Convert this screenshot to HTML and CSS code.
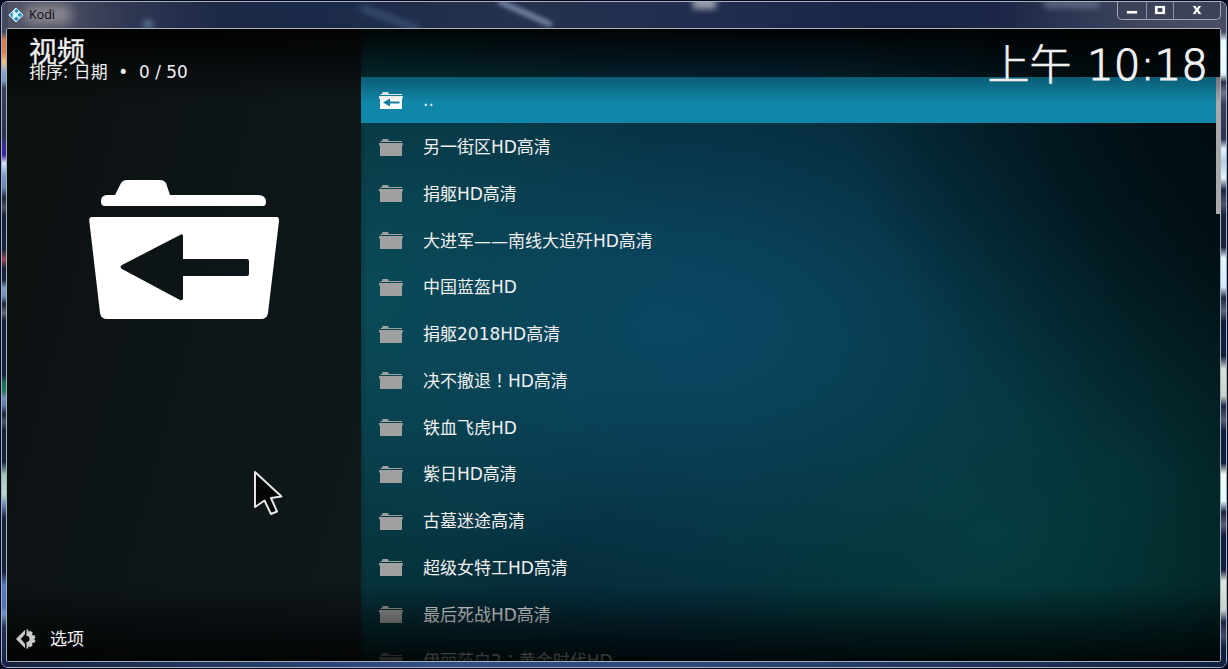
FILE: index.html
```html
<!DOCTYPE html>
<html lang="zh-CN">
<head>
<meta charset="utf-8">
<title>Kodi</title>
<link rel="stylesheet" href="styles.css">
</head>
<body>
<svg class="defs" width="0" height="0" aria-hidden="true">
  <symbol id="folder" viewBox="0 0 24 18">
    <path d="M1.500 3V2H3.200V1Q3.200 0 4 0H8.600Q9.400 0 9.500 1L9.800 2H23V3ZM0 4H23.800V6.500H23V17H1V6.500H0Z"/>
  </symbol>
</svg>
<div class="window">
  <div class="glass">
    <i class="smear smear-halo"></i><i class="smear smear-dot"></i><i class="smear smear-a"></i><i class="smear smear-b"></i><i class="smear smear-c"></i><i class="smear smear-d"></i>
  </div>
  <header class="titlebar">
    <svg class="logo" viewBox="0 0 16 16"><path d="M8 .5 15.5 8 8 15.500.5 8Z" fill="#e5f6fb"/><path d="M8.500 1.800 10.800 4 8.500 6.300 6.200 4ZM4.800 4.500v1.700L3 8 1.700 8ZM4.800 6.500V11.200L2.200 8.600ZM11.800 5.400 14.300 8l-2.500 2.600L9.200 8ZM8.500 9.400l2.300 2.400L8.300 14.200l-2.600-2.400Z" fill="#2299c5"/></svg>
    <span class="app-name">Kodi</span>
    <div class="controls">
      <span class="control"><svg viewBox="0 0 14 12"><path d="M1.500 6.500h11v3.500h-11z" fill="#fff" stroke="#4b4e58"/></svg></span>
      <span class="control"><svg viewBox="0 0 14 12"><path d="M1.500 1.500h11v9h-11zM5 4.500v3h4v-3z" fill="#fff" fill-rule="evenodd" stroke="#4b4e58"/></svg></span>
      <span class="control control-close"><svg viewBox="0 0 14 12"><path d="M2 1.500h3.500L7 3.600 8.500 1.500H12L9 5.800 12 10.500H8.500L7 8.200 5.500 10.500H2L5 5.800Z" fill="#fff" stroke="#4b4e58"/></svg></span>
    </div>
  </header>
  <main class="screen">
    <aside class="sidebar">
      <h1 class="title">视频</h1>
      <p class="sort">排序: 日期  •  0 / 50</p>
      <svg class="big-folder" viewBox="0 0 190 140">
        <path d="M16 26Q12 26 12 21.500 12 15 18 15H26L32 3Q34 0 38 0H71Q75 0 77 3L81 15H169Q177 15 177 22 177 26 174 26Z"/>
        <path fill-rule="evenodd" d="M3 37H188Q190 37 190 41L179 133Q178 139 172 139H18Q12 139 11 133L.3 41Q0 37 3 37ZM33 85Q30 87 33 89L91 120Q94 121 94 118V96H158Q160 96 160 94V81Q160 79 158 79H94V56Q94 53 91 55Z"/>
      </svg>
      <div class="options">
        <svg viewBox="0 0 20 20"><path d="M9 .8V5.300L4.800 10 9 14.700v4.500L0 10ZM10.500 .5h1.800v2.200l2-.9 2.400 2-.8 2.100 2.700.3.8 2.500-1.500 1.300 1.500 1.300-.8 2.500-2.700.3.800 2.100-2.400 2-2-.9v2.200H10.500v-6.500a3 3 0 0 0 0-6Z"/></svg>
        <span>选项</span>
      </div>
    </aside>
    <section class="library">
      <ul class="list">
        <li class="row selected"><svg viewBox="0 0 24 18"><use href="#folder"/><path class="arrow" d="M4 10.500 11 6.400v3H20.500v2.200H11v3Z"/></svg><span>..</span></li>
        <li class="row"><svg><use href="#folder"/></svg><span>另一街区HD高清</span></li>
        <li class="row"><svg><use href="#folder"/></svg><span>捐躯HD高清</span></li>
        <li class="row"><svg><use href="#folder"/></svg><span>大进军——南线大追歼HD高清</span></li>
        <li class="row"><svg><use href="#folder"/></svg><span>中国蓝盔HD</span></li>
        <li class="row"><svg><use href="#folder"/></svg><span>捐躯2018HD高清</span></li>
        <li class="row"><svg><use href="#folder"/></svg><span>决不撤退<b class="mark" lang="zh-TW">！</b>HD高清</span></li>
        <li class="row"><svg><use href="#folder"/></svg><span>铁血飞虎HD</span></li>
        <li class="row"><svg><use href="#folder"/></svg><span>紫日HD高清</span></li>
        <li class="row"><svg><use href="#folder"/></svg><span>古墓迷途高清</span></li>
        <li class="row"><svg><use href="#folder"/></svg><span>超级女特工HD高清</span></li>
        <li class="row"><svg><use href="#folder"/></svg><span>最后死战HD高清</span></li>
        <li class="row"><svg><use href="#folder"/></svg><span>伊丽莎白2<b class="mark" lang="zh-TW">：</b>黄金时代HD</span></li>
      </ul>
      <i class="scrollbar"></i>
    </section>
    <i class="shade shade-top"></i>
    <i class="shade shade-bottom"></i>
    <time class="clock"><span class="period">上午</span> 10:18</time>
    <svg class="pointer" viewBox="0 0 30 46"><path d="M2 2V37L11.500 30.500 18 44 24 41.500 18 28 28.500 26.500Z"/></svg>
  </main>
</div>
</body>
</html>
```

FILE: styles.css
```css
* { box-sizing: border-box; }
body {
  margin: 0;
  width: 1228px;
  height: 669px;
  overflow: hidden;
  background: #030a20;
  font-family: "DejaVu Sans", "Noto Sans CJK SC", sans-serif;
  color: #f0f0f0;
}
.defs { position: absolute; }
.window {
  position: relative;
  width: 1226px;
  height: 667px;
  margin: 1px;
  border: 1px solid #a9afbd;
  border-radius: 7px;
  overflow: hidden;
  background: #16233f;
}
.glass {
  position: absolute;
  inset: 0;
  background:
    linear-gradient(180deg, #424a62 0 30px, #d97a50 38px, #dc8055 50px, #efc385 60px, #83a5d0 70px, #7598c5 79px, #38425f 86px, #29314f 135px, #3c26a0 145px, #3c26a0 153px, #d7e5ff 161px, #7599c9 174px, #6889b9 185px, #1c2944 196px, #465064 205px, #17233d 214px, #18243e 248px, #a34452 257px, #18243e 266px, #18243e 278px, #7b9bc8 286px, #6f8fbc 294px, #18243e 302px, #5e697d 311px, #16223c 318px, #16223c 373px, #147451 381px, #24765c 389px, #6b8cbd 396px, #5e7dab 403px, #17233d 412px, #46526a 420px, #15213d 428px, #15213d 460px, #a4cbbb 473px, #bbdccc 492px, #6d8ec0 502px, #16233f 516px, #15213f 570px, #557fc5 584px, #4b73b4 604px, #7094c6 612px, #1f315b 625px, #14214a 664px) left / 6px 100% no-repeat,
    linear-gradient(180deg, #464b61 0 30px, #eaffff 39px, #e7fbff 72px, #28334b 80px, #69758d 91px, #37405a 102px, #29344e 137px, #e5f6ff 147px, #b9ccdd 160px, #e5f6ff 176px, #17243e 188px, #4a566b 202px, #16233d 213px, #16233d 245px, #e4f9ff 256px, #d3e9ff 285px, #182641 296px, #59677e 309px, #101e3d 320px, #101e3d 354px, #d5e2d7 367px, #c6d5ca 394px, #182641 404px, #536078 418px, #101e3d 429px, #101e3d 461px, #edfff1 472px, #e3fcff 499px, #182641 510px, #536078 523px, #101e3d 534px, #101e3d 568px, #e0eadc 579px, #c3d3cb 608px, #182641 620px, #404d68 634px, #101e3d 645px) right / 6px 100% no-repeat,
    linear-gradient(90deg, #515465 0, #4a4d62 60px, #303752 125px, #1b2947 220px, #1c2a49 310px, #24324f 520px, #1f2b4d 760px, #182544 880px, #1c2747 1000px, #40465f 1140px, #4c5064) top / 100% 28px no-repeat,
    linear-gradient(90deg, #16213c, #315087 35%, #2d4674 60%, #122040) bottom / 100% 6px no-repeat;
}
.smear { position: absolute; background: #7387aa; filter: blur(3px); }
.smear-halo { left: 22px; top: 3px; width: 48px; height: 19px; border-radius: 9px; background: #8b8991; filter: blur(6px); }
.smear-dot { left: 141px; top: 18px; width: 10px; height: 9px; border-radius: 50%; background: #62799d; }
.smear-a { left: 357px; top: 14px; width: 62px; height: 5px; transform: rotate(20deg); background: #40577c; }
.smear-b { left: 494px; top: 8px; width: 58px; height: 6px; transform: rotate(24deg); background: #71809e; filter: blur(2px); }
.smear-c { left: 691px; top: -5px; width: 23px; height: 12px; background: #9ba2b1; }
.smear-d { left: 1042px; top: -3px; width: 55px; height: 9px; background: #5d6880; }
.titlebar {
  position: relative;
  display: flex;
  height: 26px;
  padding-left: 6px;
}
.logo { width: 16px; height: 16px; margin-top: 5px; }
.app-name {
  margin: 5px 0 0 5px;
  font: 12.5px/16px "Open Sans", sans-serif;
  color: #090a10;
}
.controls {
  display: flex;
  width: 104px;
  height: 19px;
  margin: -1px 5px 0 auto;
  border: 1px solid #a0a5b4;
  border-top: 0;
  border-radius: 0 0 5px 5px;
  background: #3b425a;
}
.control {
  display: flex;
  width: 29px;
  justify-content: center;
  padding-top: 3px;
  border-right: 1px solid #8b91a3;
}
.control svg { width: 14px; height: 12px; }
.control:nth-child(2) { width: 27px; }
.control-close { flex: 1; border: 0; }
.screen {
  position: relative;
  display: flex;
  width: 1215px;
  height: 634px;
  margin-left: 4px;
  border: 1px solid #a7adbb;
  border-radius: 2px;
  overflow: hidden;
  background: #000;
}
.sidebar {
  display: flex;
  flex-direction: column;
  width: 354px;
  padding: 6px 9px 9px 22px;
  background: linear-gradient(105deg, #0c1010, #0e1619 60%, #10181b);
}
.title { position: relative; z-index: 2; margin: 0; font: 400 28px/30px "Noto Sans CJK SC", sans-serif; -webkit-text-stroke: .3px; }
.sort { position: relative; z-index: 2; margin: -4px 0 0; font-size: 16.9px; line-height: 22px; white-space: pre; }
.big-folder { width: 190px; height: 140px; margin: 97px 0 0 60px; fill: #fff; }
.options {
  position: relative;
  z-index: 2;
  display: flex;
  align-items: center;
  gap: 14px;
  margin: auto 0 0 -13px;
  font-size: 17px;
  line-height: 26px;
}
.options svg { width: 20px; height: 20px; fill: #c9c9c9; }
.library {
  display: flex;
  flex: 1;
  align-items: flex-start;
  padding-top: 48px;
  background:
    linear-gradient(90deg, #00000020, transparent 6px),
    radial-gradient(ellipse 380px 420px at 100% 5%, #000a0ed0, #000a0e80 40%, transparent),
    radial-gradient(ellipse 330px 320px at 0 43%, #0b4e5ccc, #0b4e5c60 50%, transparent),
    radial-gradient(ellipse 600px 360px at 37% 47%, #0a4762, #0a4762d0 25%, #0942578c 50%, #083b4a3c 75%, transparent),
    radial-gradient(ellipse 420px 330px at 73% 80%, #043d3d, #043a3ab0 40%, transparent),
    linear-gradient(90deg, #052f35, #062438 40%, #03202c 75%, #021216);
}
.list { flex: 1; margin: 0; padding: 0; list-style: none; }
.row {
  display: flex;
  align-items: center;
  gap: 20px;
  height: 46.75px;
  padding-left: 18px;
  font-size: 17px;
  line-height: 24px;
  white-space: pre;
}
.row svg { width: 24px; height: 18px; margin-top: 1px; fill: #a0a0a0; }
.mark { font: 400 17px/1 "Noto Sans CJK TC", sans-serif; }
.selected { height: 46px; margin-bottom: .75px; background: #1087a8; }
.selected svg { fill: #fff; }
.selected .arrow { fill: #117fa0; }
.scrollbar { width: 4px; height: 137px; background: #a9a9a9; }
.shade { position: absolute; left: 0; right: 0; pointer-events: none; }
.shade-top { top: 0; height: 74px; background: linear-gradient(#000000ea, #00000050 65%, transparent); }
.shade-bottom { bottom: 0; height: 76px; background: linear-gradient(transparent, #00000070 50%, #000000d0); }
.clock {
  position: absolute;
  top: 6px;
  right: 12px;
  font: 200 42px/54px "DejaVu Sans", sans-serif;
  -webkit-text-stroke: 1.2px;
}
.period { margin-right: 2px; font-family: "Noto Sans CJK SC", sans-serif; font-weight: 300; -webkit-text-stroke: .6px; }
.pointer { position: absolute; left: 246px; top: 441px; width: 30px; height: 46px; fill: #050505; stroke: #e5e5e5; stroke-width: 2; stroke-linejoin: round; }
```
